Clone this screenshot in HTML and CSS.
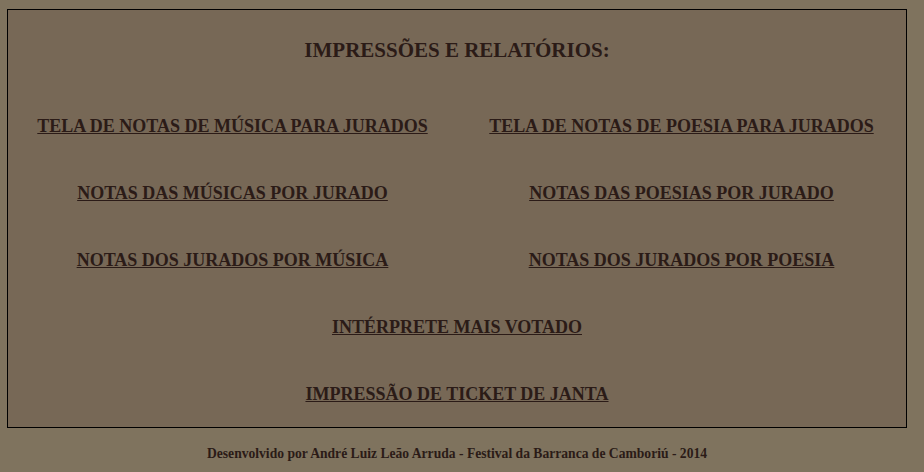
FILE: index.html
```html
<!DOCTYPE html>
<html lang="pt">
<head>
<meta charset="utf-8">
<title>Impressões e Relatórios</title>
<link rel="stylesheet" href="styles.css">
</head>
<body>
<div class="page">
  <div class="panel">
    <h1 class="title">IMPRESSÕES E RELATÓRIOS:</h1>
    <div class="links">
      <a class="link" href="#">TELA DE NOTAS DE MÚSICA PARA JURADOS</a>
      <a class="link" href="#">TELA DE NOTAS DE POESIA PARA JURADOS</a>
      <a class="link" href="#">NOTAS DAS MÚSICAS POR JURADO</a>
      <a class="link" href="#">NOTAS DAS POESIAS POR JURADO</a>
      <a class="link" href="#">NOTAS DOS JURADOS POR MÚSICA</a>
      <a class="link" href="#">NOTAS DOS JURADOS POR POESIA</a>
      <a class="link wide" href="#">INTÉRPRETE MAIS VOTADO</a>
      <a class="link wide" href="#">IMPRESSÃO DE TICKET DE JANTA</a>
    </div>
  </div>
  <p class="footer">Desenvolvido por André Luiz Leão Arruda - Festival da Barranca de Camboriú - 2014</p>
</div>
</body>
</html>
```
FILE: styles.css
```css
html, body {
  margin: 0;
  padding: 0;
  background: #7f735e;
}
body {
  font-family: "Liberation Serif", "Times New Roman", serif;
  color: #2b1b17;
}
.page {
  width: 900px;
  padding: 9px 0 0 7px;
}
.panel {
  border: 1px solid #000;
  background: #776856;
  height: 417px;
  box-sizing: content-box;
}
.title {
  margin: 0;
  padding-top: 29px;
  height: 26px;
  font-size: 21px;
  font-weight: bold;
  text-align: center;
  line-height: 22px;
}
.links {
  display: grid;
  grid-template-columns: 1fr 1fr;
  grid-auto-rows: 67px;
  padding-top: 50px;
}
.link {
  justify-self: center;
  align-self: start;
  color: #2b1b17;
  font-size: 18px;
  font-weight: bold;
  line-height: 22px;
  text-decoration: underline;
}
.wide {
  grid-column: 1 / 3;
}
.footer {
  margin: 18px 0 0;
  text-align: center;
  font-size: 13.6px;
  font-weight: bold;
  line-height: 16px;
}
```
